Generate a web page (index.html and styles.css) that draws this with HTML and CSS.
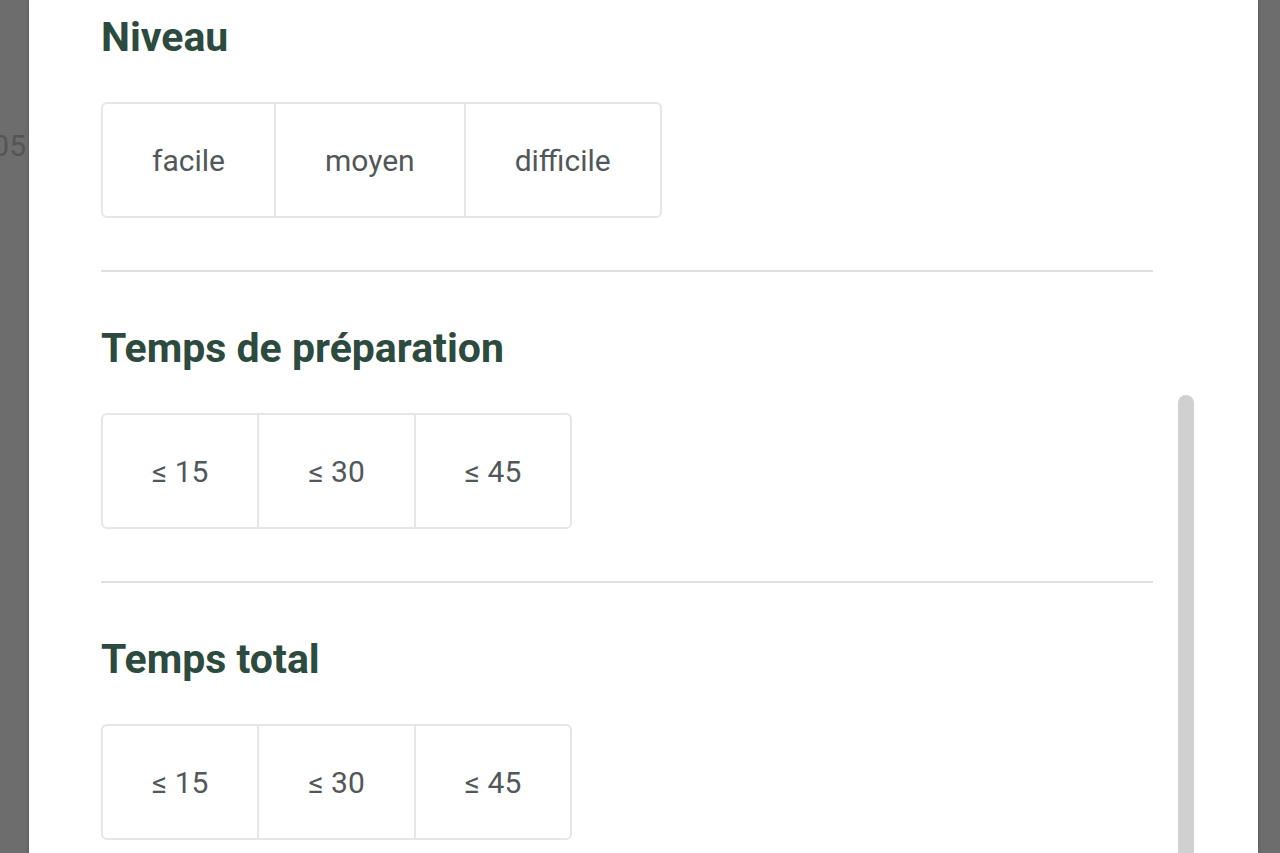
FILE: index.html
```html
<!DOCTYPE html>
<html lang="fr">
<head>
  <meta charset="UTF-8">
  <meta name="viewport" content="width=device-width, initial-scale=1.0">
  <title>Filtres</title>
  <link rel="stylesheet" href="styles.css">
</head>
<body>
  <div class="backdrop-left">
    <span class="backdrop-text">05</span>
  </div>

  <div class="panel">
    <div class="filters">
      <section class="filter">
        <h2 class="filter-title">Niveau</h2>
        <div class="choice-group">
          <button class="choice">facile</button>
          <button class="choice">moyen</button>
          <button class="choice">difficile</button>
        </div>
      </section>

      <hr class="divider">

      <section class="filter">
        <h2 class="filter-title">Temps de préparation</h2>
        <div class="choice-group">
          <button class="choice">≤ 15</button>
          <button class="choice">≤ 30</button>
          <button class="choice">≤ 45</button>
        </div>
      </section>

      <hr class="divider">

      <section class="filter">
        <h2 class="filter-title">Temps total</h2>
        <div class="choice-group">
          <button class="choice">≤ 15</button>
          <button class="choice">≤ 30</button>
          <button class="choice">≤ 45</button>
        </div>
      </section>
    </div>

    <div class="scroll-track">
      <div class="scroll-thumb"></div>
    </div>
  </div>

  <div class="backdrop-right"></div>
</body>
</html>
```

FILE: styles.css
```css
body {
  margin: 0;
  height: 853px;
  overflow: hidden;
  display: flex;
  background: #6d6d6d;
  font-family: Roboto, 'Liberation Sans', sans-serif;
}

.backdrop-left {
  width: 29px;
  flex-shrink: 0;
  display: flex;
  justify-content: flex-end;
  align-items: flex-start;
  overflow: hidden;
  padding-right: 3px;
  box-sizing: border-box;
}

.backdrop-text {
  margin-top: 128px;
  font-size: 30px;
  color: #555;
  white-space: nowrap;
}

.backdrop-right {
  width: 22px;
  flex-shrink: 0;
}

.panel {
  flex: 1;
  background: #fff;
  display: flex;
  box-shadow: 0 0 3px rgba(0, 0, 0, 0.25);
}

.filters {
  width: 1052px;
  padding: 13px 0 0 72px;
}

.filter-title {
  margin: 0 0 41px;
  font-size: 41px;
  line-height: 48px;
  font-weight: 700;
  color: #2c4a3e;
}

.choice-group {
  display: inline-flex;
  box-sizing: border-box;
  height: 116px;
  border: 2px solid #e6e6e6;
  border-radius: 6px;
}

.choice {
  border: none;
  border-left: 2px solid #e6e6e6;
  background: #fff;
  padding: 0 49px;
  font-family: Roboto, 'Liberation Sans', sans-serif;
  font-size: 30px;
  color: #52585a;
  cursor: pointer;
}

.choice:first-child {
  border-left: none;
  border-radius: 6px 0 0 6px;
}

.choice:last-child {
  border-radius: 0 6px 6px 0;
}

.divider {
  margin: 52px 0;
  border: none;
  border-top: 2px solid #e0e0e0;
}

.scroll-track {
  margin-left: 25px;
  width: 16px;
  padding-top: 395px;
}

.scroll-thumb {
  height: 100%;
  background: #d0d0d0;
  border-radius: 8px 8px 0 0;
}
```
